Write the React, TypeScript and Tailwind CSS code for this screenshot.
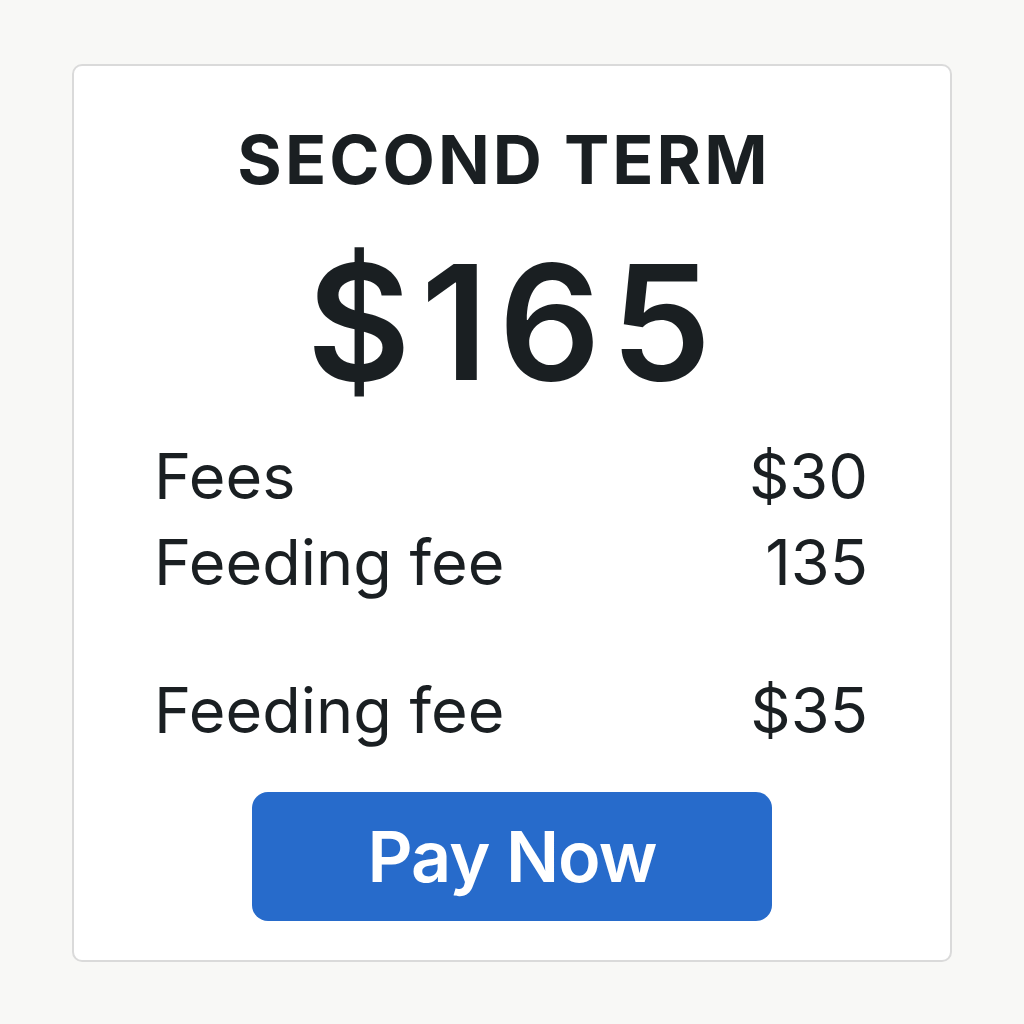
import React from "react";

export default function App() {
  const rows = [
    { label: "Fees", value: "$30" },
    { label: "Feeding fee", value: "135" },
  ];
  return (
    <div
      className="w-[1024px] h-[1024px] bg-[#f8f8f6] pt-[64px] pl-[72px]"
      style={{ fontFamily: "Inter, 'Liberation Sans', sans-serif" }}
    >
      <div className="w-[880px] h-[898px] bg-white border-2 border-[#dadada] rounded-[10px] flex flex-col items-center text-[#1a1f22]">
        <h1 className="mt-[53px] pr-[16px] text-[68px] leading-[80px] font-bold tracking-[3px]">SECOND TERM</h1>
        <div className="mt-[33px] pl-[4px] text-[160px] leading-[180px] font-semibold tracking-[10px]">$165</div>
        <div className="mt-[21px] w-[716px] pr-[2px] flex flex-col">
          {rows.map((r) => (
            <div key={r.label + r.value} className="flex justify-between text-[63px] leading-[86px]">
              <span>{r.label}</span>
              <span>{r.value}</span>
            </div>
          ))}
          <div className="mt-[62px] flex justify-between text-[63px] leading-[86px]">
            <span>Feeding fee</span>
            <span>$35</span>
          </div>
        </div>
        <button className="mt-[39px] w-[520px] h-[129px] rounded-[16px] bg-[#276bcb] text-white text-[70px] font-semibold tracking-[-1px]">
          Pay Now
        </button>
      </div>
    </div>
  );
}
